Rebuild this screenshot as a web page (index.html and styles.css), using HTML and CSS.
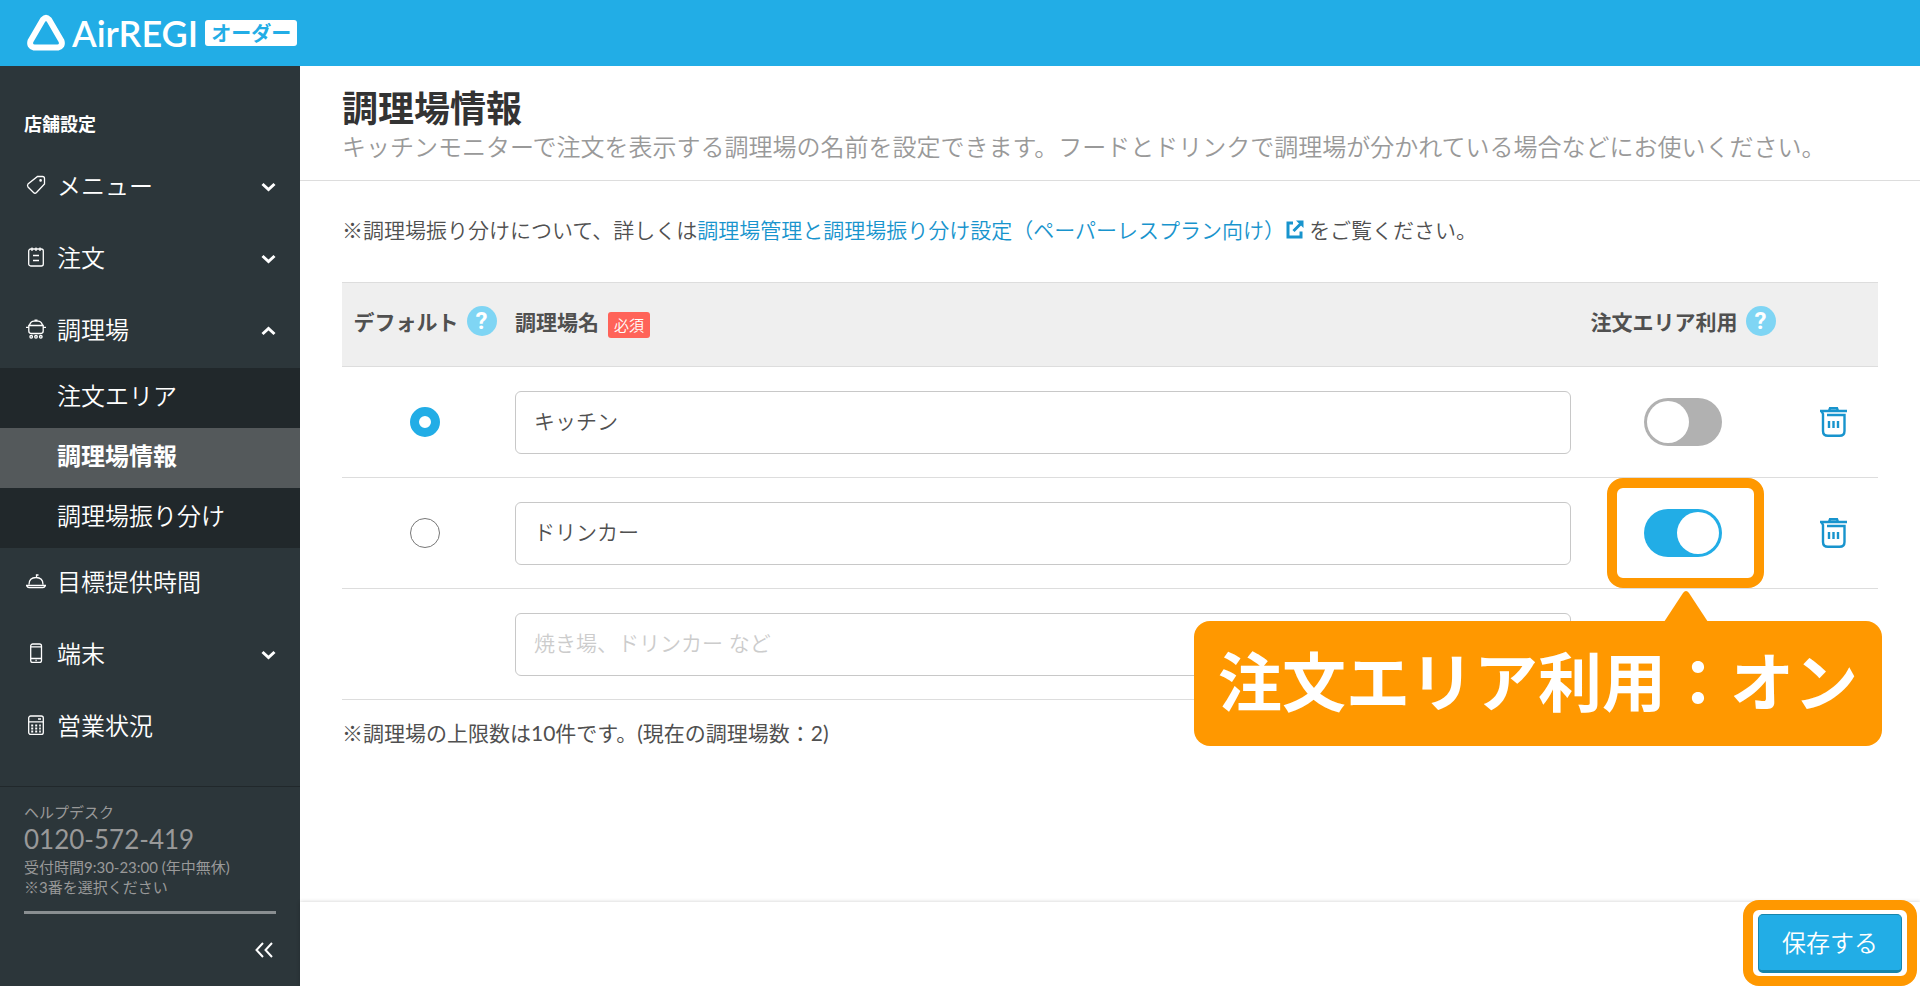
FILE: index.html
```html
<!DOCTYPE html>
<html lang="ja">
<head>
  <meta charset="UTF-8">
  <meta name="viewport" content="width=device-width, initial-scale=1.0">
  <title>調理場情報 | AirREGI オーダー</title>
  <link rel="stylesheet" href="styles.css">
</head>
<body>
  <header class="topbar">
    <a href="#" class="logo">
      <svg class="logo-mark" width="40" height="38" viewBox="0 0 40 38" fill="none" stroke="#fff" stroke-width="6" stroke-linejoin="round">
        <path d="M17 5.500Q20 2.500 23 5.500L35.500 27Q37 32.500 32 33.500H8Q3 32.500 4.500 27Z"/>
      </svg>
      <span class="logo-name">AirREGI</span>
      <span class="logo-tag">オーダー</span>
    </a>
  </header>

  <div class="layout">
    <aside class="sidebar">
      <h2 class="sidebar-title">店舗設定</h2>
      <nav class="menu">
        <button type="button" class="menu-item">
          <svg class="icon" viewBox="0 0 20 20"><path d="M11.500 1.500H16.500Q18.500 1.500 18.500 3.500V9L10.500 17.500Q9 19 7.500 17.500L2 12Q1 10.500 2 9Z"/><circle cx="14.600" cy="5.400" r=".7"/></svg>
          <span class="menu-label">メニュー</span>
          <svg class="chevron" viewBox="0 0 15 10"><path d="M1.500 2L7.500 7.500L13.500 2"/></svg>
        </button>
        <button type="button" class="menu-item">
          <svg class="icon" viewBox="0 0 20 20"><rect x="2.700" y="2" width="14.600" height="17" rx="2"/><path d="M6 .5V4M10 .5V4M14 .5V4M7 8.500H13M7 13.500H13"/></svg>
          <span class="menu-label">注文</span>
          <svg class="chevron" viewBox="0 0 15 10"><path d="M1.500 2L7.500 7.500L13.500 2"/></svg>
        </button>
        <button type="button" class="menu-item" aria-expanded="true">
          <svg class="icon" viewBox="0 0 20 20"><path d="M2.800 6.500H17.200V12Q17.200 14.500 14.500 14.500H5.500Q2.800 14.500 2.800 12ZM3.500 6Q5 2.200 8 2.200H12Q15 2.200 16.500 6M8.500 1.200H11.500M0 8.300H2.800M17.200 8.300H20"/><circle cx="5.200" cy="17.800" r="1.300"/><circle cx="10" cy="17.800" r="1.300"/><circle cx="14.800" cy="17.800" r="1.300"/></svg>
          <span class="menu-label">調理場</span>
          <svg class="chevron" viewBox="0 0 15 10"><path d="M1.500 8L7.500 2.500L13.500 8"/></svg>
        </button>
        <div class="submenu">
          <a href="#" class="submenu-item">注文エリア</a>
          <a href="#" class="submenu-item active">調理場情報</a>
          <a href="#" class="submenu-item">調理場振り分け</a>
        </div>
        <a href="#" class="menu-item">
          <svg class="icon" viewBox="0 0 20 20"><path d="M3 13.500Q3 6.500 10 6.500Q17 6.500 17 13.500M.5 14.500H19.500Q18.500 16.600 17 16.600H3Q1.500 16.600 .5 14.500ZM10.500 6.500V4H12.500"/></svg>
          <span class="menu-label">目標提供時間</span>
        </a>
        <button type="button" class="menu-item">
          <svg class="icon" viewBox="0 0 20 20"><rect x="4.700" y="1" width="10.800" height="18.500" rx="2"/><path d="M5 3.800H15M5 15.500H15M9.500 17.500H10.700"/></svg>
          <span class="menu-label">端末</span>
          <svg class="chevron" viewBox="0 0 15 10"><path d="M1.500 2L7.500 7.500L13.500 2"/></svg>
        </button>
        <a href="#" class="menu-item">
          <svg class="icon" viewBox="0 0 20 20"><rect x="2.700" y="1" width="14.600" height="18.500" rx="2"/><path d="M3 6.800H17M12 4H15"/><path class="keys" d="M5.200 10.500H14.800M5.200 13.500H14.800M5.200 16.500H14.800"/></svg>
          <span class="menu-label">営業状況</span>
        </a>
      </nav>
      <div class="helpdesk">
        <div class="helpdesk-small">ヘルプデスク</div>
        <div class="helpdesk-tel">0120-572-419</div>
        <div class="helpdesk-small">受付時間9:30-23:00 (年中無休)<br>※3番を選択ください</div>
        <button type="button" class="collapse" aria-label="メニューを閉じる">
          <svg width="18" height="16" viewBox="0 0 18 16" fill="none" stroke="#fff" stroke-width="2"><path d="M8 1L1.500 8L8 15M17 1L10.500 8L17 15"/></svg>
        </button>
      </div>
    </aside>

    <main class="main">
      <div class="page-head">
        <h1>調理場情報</h1>
        <p>キッチンモニターで注文を表示する調理場の名前を設定できます。フードとドリンクで調理場が分かれている場合などにお使いください。</p>
      </div>

      <form class="content" id="kitchenForm">
        <p class="note">※調理場振り分けについて、詳しくは<a href="#">調理場管理と調理場振り分け設定（ペーパーレスプラン向け）<svg class="external" width="18" height="19" viewBox="0 0 18 19" fill="none" stroke="currentColor" stroke-width="3"><path d="M7 3H2V17H15V11.500M7.500 11L14.500 4"/><path d="M10 .5H17.500V8Z" fill="currentColor" stroke="none"/></svg></a>をご覧ください。</p>

        <table class="kitchens">
          <thead>
            <tr>
              <th class="col-default"><span class="th-label">デフォルト<button type="button" class="help" aria-label="デフォルトのヘルプ">?</button></span></th>
              <th class="col-name"><span class="th-label">調理場名<span class="required">必須</span></span></th>
              <th class="col-area"><span class="th-label">注文エリア利用<button type="button" class="help" aria-label="注文エリア利用のヘルプ">?</button></span></th>
              <th class="col-delete"></th>
            </tr>
          </thead>
          <tbody>
            <tr>
              <td class="col-default"><input type="radio" class="radio" name="default" aria-label="キッチンをデフォルトにする" checked></td>
              <td class="col-name"><input type="text" class="text-box" value="キッチン" aria-label="調理場名 1"></td>
              <td class="col-area"><div class="toggle-wrap"><input type="checkbox" class="toggle" aria-label="キッチンの注文エリア利用"></div></td>
              <td class="col-delete">
                <button type="button" class="delete" aria-label="キッチンを削除">
                  <svg width="27" height="30" viewBox="0 0 27 30" fill="none" stroke="currentColor" stroke-width="2.400"><path d="M0 4H27M9 4L10 1.200H17L18 4M1.500 4L3 7V24Q3 28.800 8 28.800H19.500Q24.500 28.800 24.500 24V8H7"/><path d="M9 14V21M13.500 14V21M18 14V21"/></svg>
                </button>
              </td>
            </tr>
            <tr>
              <td class="col-default"><input type="radio" class="radio" name="default" aria-label="ドリンカーをデフォルトにする"></td>
              <td class="col-name"><input type="text" class="text-box" value="ドリンカー" aria-label="調理場名 2"></td>
              <td class="col-area">
                <div class="toggle-wrap">
                  <input type="checkbox" class="toggle" aria-label="ドリンカーの注文エリア利用" checked>
                  <div class="frame toggle-frame"></div>
                  <div class="callout">
                    <svg class="callout-tip" width="44" height="31" viewBox="0 0 44 31"><path d="M0 31L19 2Q22 -2 25 2L44 31Z" fill="#ff9800"/></svg>
                    注文エリア利用：オン
                  </div>
                </div>
              </td>
              <td class="col-delete">
                <button type="button" class="delete" aria-label="ドリンカーを削除">
                  <svg width="27" height="30" viewBox="0 0 27 30" fill="none" stroke="currentColor" stroke-width="2.400"><path d="M0 4H27M9 4L10 1.200H17L18 4M1.500 4L3 7V24Q3 28.800 8 28.800H19.500Q24.500 28.800 24.500 24V8H7"/><path d="M9 14V21M13.500 14V21M18 14V21"/></svg>
                </button>
              </td>
            </tr>
            <tr>
              <td class="col-default"></td>
              <td class="col-name"><input type="text" class="text-box" placeholder="焼き場、ドリンカー など" aria-label="調理場名 3"></td>
              <td class="col-area"></td>
              <td class="col-delete"></td>
            </tr>
          </tbody>
        </table>
        <p class="limit">※調理場の上限数は10件です。(現在の調理場数：2)</p>
      </form>

      <footer class="actions">
        <div class="save-wrap">
          <button type="submit" class="save" form="kitchenForm">保存する</button>
          <div class="frame save-frame"></div>
        </div>
      </footer>
    </main>
  </div>
</body>
</html>
```
FILE: styles.css
```css
* {
  box-sizing: border-box;
}
body {
  margin: 0;
  min-height: 100vh;
  display: flex;
  flex-direction: column;
  font-family: Lato, "Noto Sans CJK JP", sans-serif;
  font-weight: 350;
  font-size: 21px;
  color: #505050;
  background: #fff;
}
h1, h2, p {
  margin: 0;
}
button, input {
  font: inherit;
  color: inherit;
}
button {
  border: none;
  background: none;
  padding: 0;
  cursor: pointer;
}
a {
  color: #1894cd;
  text-decoration: none;
}

/* Header */
.topbar {
  height: 66px;
  padding-left: 26px;
  display: flex;
  align-items: center;
  background: #22ade6;
}
.logo {
  display: flex;
  align-items: center;
  color: #fff;
}
.logo-name {
  margin-left: 6px;
  font-weight: 600;
  font-size: 36px;
  line-height: 40px;
}
.logo-tag {
  margin-left: 7px;
  padding: 0 6px;
  border-radius: 3px;
  background: #fff;
  color: #22ade6;
  font-weight: 700;
  font-size: 20px;
  line-height: 26px;
}

.layout {
  flex: 1;
  display: flex;
}

/* Sidebar */
.sidebar {
  flex: 0 0 300px;
  display: flex;
  flex-direction: column;
  background: #2c363a;
  color: #fff;
}
.sidebar-title {
  padding: 43px 24px 13px;
  font-size: 18px;
  line-height: 30px;
}
.menu-item {
  display: flex;
  align-items: center;
  width: 100%;
  height: 72px;
  padding: 0 24px 6px 26px;
  color: #fff;
  font-size: 24px;
  text-align: left;
}
.icon {
  width: 20px;
  height: 20px;
  margin-right: 11px;
  fill: none;
  stroke: #fff;
  stroke-width: 1.3;
}
.icon .keys {
  stroke-width: 2;
  stroke-dasharray: 2 2;
}
.menu-label {
  flex: 1;
  padding-bottom: 2px;
}
.chevron {
  width: 15px;
  height: 10px;
  margin-top: 4px;
  fill: none;
  stroke: #fff;
  stroke-width: 3;
}
.submenu {
  background: #21282b;
}
.submenu-item {
  display: block;
  height: 60px;
  padding-left: 57px;
  color: #fff;
  font-size: 24px;
  line-height: 55px;
}
.submenu-item.active {
  background: #54595b;
  font-weight: 700;
}
.helpdesk {
  margin-top: auto;
  height: 200px;
  padding: 15px 24px 0;
  border-top: 1px solid #21282b;
  color: #999;
  font-weight: 400;
  display: flex;
  flex-direction: column;
}
.helpdesk-small {
  font-size: 15px;
  line-height: 20px;
}
.helpdesk-tel {
  font-size: 26px;
  line-height: 35px;
}
.collapse {
  display: flex;
  justify-content: flex-end;
  margin-top: 14px;
  padding: 28px 3px 0 0;
  border-top: 3px solid #8a8f91;
}

/* Main */
.main {
  flex: 1;
  min-width: 0;
  display: flex;
  flex-direction: column;
}
.page-head {
  padding: 21px 42px 15px;
  border-bottom: 1px solid #ddd;
}
.page-head h1 {
  color: #333;
  font-size: 36px;
  line-height: 42px;
}
.page-head p {
  color: #999;
  font-size: 24px;
  line-height: 36px;
}
.content {
  flex: 1;
  padding: 34px 42px 0;
}
.note, .limit {
  line-height: 30px;
}
.external {
  margin: 0 5px 0 1px;
  vertical-align: -1px;
}
.kitchens {
  width: 100%;
  margin-top: 37px;
  border-collapse: collapse;
  table-layout: fixed;
}
.kitchens th {
  height: 84px;
  padding: 0 7px 8px;
  background: #efefef;
  border-top: 1px solid #ddd;
  border-bottom: 1px solid #ddd;
}
.kitchens td {
  height: 111px;
  padding: 0 7px;
  border-bottom: 1px solid #ddd;
  text-align: center;
}
.kitchens .col-default {
  width: 166px;
  padding-left: 0;
  padding-right: 0;
}
.kitchens .col-area {
  width: 210px;
}
.kitchens .col-delete {
  width: 90px;
}
.th-label {
  display: flex;
  align-items: center;
  justify-content: center;
  font-weight: 700;
}
.col-name .th-label {
  justify-content: flex-start;
}
.help {
  width: 30px;
  height: 30px;
  margin-left: 8px;
  border-radius: 50%;
  background: #7fd5f4;
  color: #fff;
  font-family: Roboto, sans-serif;
  font-weight: 700;
  font-size: 24px;
  line-height: 30px;
}
.required {
  margin: 8px 0 0 9px;
  padding: 0 6px;
  border-radius: 3px;
  background: #ff6359;
  color: #fff;
  font-weight: 350;
  font-size: 15px;
  line-height: 26px;
}
.text-box {
  display: block;
  width: 100%;
  height: 63px;
  padding: 0 18px 4px;
  border: 1px solid #c8c8c8;
  border-radius: 6px;
  background: #fff;
}
.text-box::placeholder {
  color: #ccc;
}
.radio {
  display: block;
  appearance: none;
  width: 30px;
  height: 30px;
  margin: 0 auto;
  border: 1px solid #777;
  border-radius: 50%;
  background: #fff;
}
.radio:checked {
  border: 9px solid #22ade6;
}
.toggle-wrap {
  position: relative;
  width: 78px;
  height: 48px;
  margin: 0 auto;
}
.toggle {
  appearance: none;
  display: flex;
  width: 78px;
  height: 48px;
  margin: 0;
  padding: 3px;
  border-radius: 24px;
  background: #b1b1b1;
}
.toggle::before {
  content: "";
  width: 42px;
  height: 42px;
  border-radius: 50%;
  background: #fff;
}
.toggle:checked {
  justify-content: flex-end;
  background: #22ade6;
}
.delete {
  display: block;
  margin: 0 auto;
  color: #1894cd;
}
.delete svg {
  display: block;
}
.limit {
  margin-top: 18px;
  font-weight: 400;
}
.actions {
  display: flex;
  justify-content: flex-end;
  height: 84px;
  padding: 12px 18px 0;
  background: #fff;
  box-shadow: 0 0 4px rgba(0, 0, 0, 0.2);
}
.save-wrap {
  position: relative;
  height: 59px;
}
.save {
  width: 144px;
  height: 59px;
  padding-bottom: 2px;
  border: 1px solid #1785ac;
  border-bottom-width: 3px;
  border-radius: 5px;
  background: #22ade6;
  color: #fff;
  font-size: 24px;
}

/* Highlights over the page */
.frame {
  position: absolute;
  border: 10px solid #ff9800;
  border-radius: 16px;
  pointer-events: none;
}
.toggle-frame {
  inset: -31px -42px -31px -37px;
}
.save-frame {
  inset: -14px -15px -13px;
}
.callout {
  position: absolute;
  top: 112px;
  right: -160px;
  z-index: 1;
  padding: 0 24px 4px;
  border-radius: 16px;
  background: #ff9800;
  color: #fff;
  font-weight: 700;
  font-size: 64px;
  line-height: 121px;
  white-space: nowrap;
}
.callout-tip {
  position: absolute;
  top: -30px;
  right: 174px;
}
```
